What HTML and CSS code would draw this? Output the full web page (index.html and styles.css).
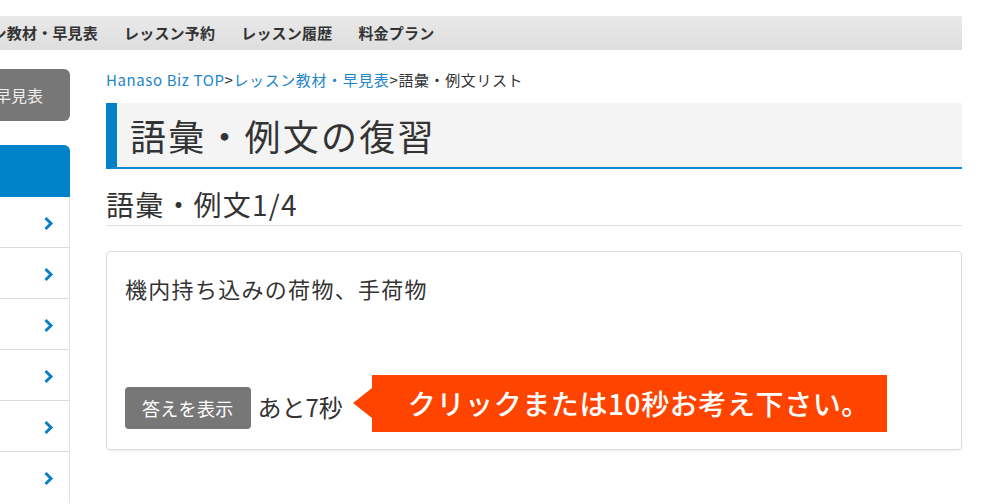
FILE: index.html
```html
<!DOCTYPE html>
<html lang="ja">
<head>
    <meta charset="UTF-8">
    <title>語彙・例文の復習</title>
    <link rel="stylesheet" href="styles.css">
</head>
<body>
    <div class="page">
        <nav class="gnav">
            <a href="#" class="gnav-item first">レッスン教材・早見表</a>
            <a href="#" class="gnav-item">レッスン予約</a>
            <a href="#" class="gnav-item">レッスン履歴</a>
            <a href="#" class="gnav-item">料金プラン</a>
        </nav>
        <div class="wrap">
            <aside class="side">
                <a href="#" class="side-btn"><span>早見表</span></a>
                <div class="side-head"></div>
                <ul class="side-list">
                    <li><svg width="11" height="15" viewBox="0 0 11 15"><path d="M2.5 2 L8 7.5 L2.5 13" fill="none" stroke="#0a80c4" stroke-width="3"/></svg></li>
                    <li><svg width="11" height="15" viewBox="0 0 11 15"><path d="M2.5 2 L8 7.5 L2.5 13" fill="none" stroke="#0a80c4" stroke-width="3"/></svg></li>
                    <li><svg width="11" height="15" viewBox="0 0 11 15"><path d="M2.5 2 L8 7.5 L2.5 13" fill="none" stroke="#0a80c4" stroke-width="3"/></svg></li>
                    <li><svg width="11" height="15" viewBox="0 0 11 15"><path d="M2.5 2 L8 7.5 L2.5 13" fill="none" stroke="#0a80c4" stroke-width="3"/></svg></li>
                    <li><svg width="11" height="15" viewBox="0 0 11 15"><path d="M2.5 2 L8 7.5 L2.5 13" fill="none" stroke="#0a80c4" stroke-width="3"/></svg></li>
                    <li><svg width="11" height="15" viewBox="0 0 11 15"><path d="M2.5 2 L8 7.5 L2.5 13" fill="none" stroke="#0a80c4" stroke-width="3"/></svg></li>
                </ul>
            </aside>
            <main class="main">
                <div class="breadcrumb">
                    <a href="#">Hanaso Biz TOP</a>&gt;<a href="#">レッスン教材・早見表</a>&gt;語彙・例文リスト
                </div>
                <h1 class="page-title">語彙・例文の復習</h1>
                <h2 class="sub-title">語彙・例文1/4</h2>
                <div class="card">
                    <p class="question">機内持ち込みの荷物、手荷物</p>
                    <div class="answer-row">
                        <button class="answer-btn">答えを表示</button>
                        <span class="countdown">あと7秒</span>
                        <div class="hint">クリックまたは10秒お考え下さい。</div>
                    </div>
                </div>
            </main>
        </div>
    </div>
</body>
</html>
```

FILE: styles.css
```css
body {
    margin: 0;
    font-family: "Noto Sans CJK JP", "Noto Sans", sans-serif;
    color: #333;
    background: #fff;
    overflow: hidden;
}
.page {
    width: 962px;
}
.gnav {
    margin-top: 16px;
    height: 34px;
    background: linear-gradient(#e9e9e9, #dedede);
    display: flex;
    align-items: center;
    gap: 26px;
    white-space: nowrap;
    overflow: hidden;
}
.gnav-item {
    color: #333;
    font-size: 15px;
    font-weight: bold;
    letter-spacing: 0.2px;
    text-decoration: none;
    line-height: 20px;
}
.gnav-item.first {
    margin-left: -54px;
}
.wrap {
    display: flex;
}
.side {
    width: 70px;
    flex-shrink: 0;
    padding-top: 19px;
}
.side-btn {
    display: flex;
    justify-content: flex-end;
    align-items: center;
    height: 52px;
    background: #777;
    color: #eee;
    border-radius: 0 6px 6px 0;
    padding-right: 27px;
    font-size: 16px;
    text-decoration: none;
    white-space: nowrap;
    overflow: hidden;
}
.side-btn span {
    flex-shrink: 0;
}
.side-head {
    margin-top: 24px;
    height: 52px;
    background: #0082c8;
    border-radius: 0 6px 0 0;
}
.side-list {
    list-style: none;
    margin: 0;
    padding: 0;
    border-right: 1px solid #e2e2e2;
}
.side-list li {
    height: 51px;
    box-sizing: border-box;
    border-bottom: 1px solid #dcdcdc;
    display: flex;
    align-items: center;
    justify-content: flex-end;
    padding-right: 15px;
    padding-top: 2px;
}
.side-list li:last-child {
    border-bottom: none;
}
.main {
    margin-left: 36px;
    width: 856px;
    padding-top: 19px;
}
.breadcrumb {
    font-size: 15px;
    letter-spacing: 0.6px;
    line-height: 22px;
    color: #333;
    white-space: nowrap;
}
.breadcrumb a {
    color: #1c86c9;
    text-decoration: none;
}
.page-title {
    margin: 12px 0 0;
    height: 64px;
    line-height: 64px;
    background: #f4f4f4;
    border-left: 11px solid #0082c8;
    border-bottom: 2px solid #0a8bd2;
    padding-left: 13px;
    font-size: 36px;
    font-weight: normal;
    letter-spacing: 2.2px;
    color: #333;
}
.sub-title {
    margin: 16px 0 0;
    line-height: 38px;
    padding-bottom: 2px;
    border-bottom: 1px solid #dedede;
    font-size: 28px;
    font-weight: normal;
    letter-spacing: 1.2px;
    color: #333;
}
.card {
    margin-top: 25px;
    border: 1px solid #dcdcdc;
    border-radius: 4px;
    box-shadow: 0 1px 2px rgba(0, 0, 0, 0.08);
    padding: 19px 18px 17px;
}
.question {
    margin: 0;
    font-size: 22px;
    letter-spacing: 1.3px;
    line-height: 34px;
    color: #333;
}
.answer-row {
    margin-top: 70px;
    display: flex;
    align-items: flex-start;
}
.answer-btn {
    margin-top: 12px;
    height: 42px;
    padding: 0 17px;
    background: #777;
    color: #fff;
    border: none;
    border-radius: 4px;
    font-family: inherit;
    font-size: 18px;
    letter-spacing: 0.3px;
    line-height: 42px;
}
.countdown {
    margin: 15px 0 0 7px;
    font-size: 24px;
    line-height: 34px;
    color: #333;
}
.hint {
    position: relative;
    margin-left: 29px;
    width: 515px;
    height: 57px;
    line-height: 57px;
    box-sizing: border-box;
    padding-left: 36px;
    background: #ff4400;
    color: #fff;
    font-size: 28px;
    font-weight: 500;
    letter-spacing: 0.6px;
    white-space: nowrap;
}
.hint::before {
    content: "";
    position: absolute;
    left: -19px;
    top: 13px;
    border-right: 19px solid #ff4400;
    border-top: 15px solid transparent;
    border-bottom: 15px solid transparent;
}
```
